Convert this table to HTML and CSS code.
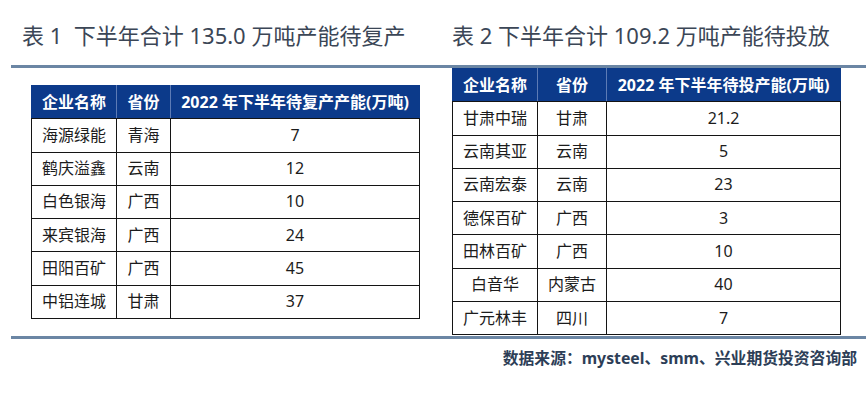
FILE: index.html
```html
<!DOCTYPE html>
<html lang="zh-CN">
<head>
<meta charset="utf-8">
<link rel="stylesheet" href="styles.css">
</head>
<body>
<div class="page">
  <div class="titles">
    <div class="title title-left">表 1&nbsp; 下半年合计 135.0 万吨产能待复产</div>
    <div class="title title-right">表 2 下半年合计 109.2 万吨产能待投放</div>
  </div>
  <div class="rule"></div>
  <div class="tables">
    <div class="col col-left">
      <table class="data t1">
        <colgroup><col class="c1"><col class="c2"><col class="c3"></colgroup>
        <thead>
          <tr><th>企业名称</th><th>省份</th><th>2022 年下半年待复产产能(万吨)</th></tr>
        </thead>
        <tbody>
          <tr><td>海源绿能</td><td>青海</td><td>7</td></tr>
          <tr><td>鹤庆溢鑫</td><td>云南</td><td>12</td></tr>
          <tr><td>白色银海</td><td>广西</td><td>10</td></tr>
          <tr><td>来宾银海</td><td>广西</td><td>24</td></tr>
          <tr><td>田阳百矿</td><td>广西</td><td>45</td></tr>
          <tr><td>中铝连城</td><td>甘肃</td><td>37</td></tr>
        </tbody>
      </table>
    </div>
    <div class="col col-right">
      <table class="data t2">
        <colgroup><col class="c1"><col class="c2"><col class="c3"></colgroup>
        <thead>
          <tr><th>企业名称</th><th>省份</th><th>2022 年下半年待投产能(万吨)</th></tr>
        </thead>
        <tbody>
          <tr><td>甘肃中瑞</td><td>甘肃</td><td>21.2</td></tr>
          <tr><td>云南其亚</td><td>云南</td><td>5</td></tr>
          <tr><td>云南宏泰</td><td>云南</td><td>23</td></tr>
          <tr><td>德保百矿</td><td>广西</td><td>3</td></tr>
          <tr><td>田林百矿</td><td>广西</td><td>10</td></tr>
          <tr><td>白音华</td><td>内蒙古</td><td>40</td></tr>
          <tr><td>广元林丰</td><td>四川</td><td>7</td></tr>
        </tbody>
      </table>
    </div>
  </div>
  <div class="rule rule-bottom"></div>
  <div class="source">数据来源：mysteel、smm、兴业期货投资咨询部</div>
</div>
</body>
</html>
```

FILE: styles.css
```css
html, body {
  margin: 0;
  padding: 0;
  background: #ffffff;
}

.page {
  width: 866px;
  height: 405px;
  font-family: "Noto Sans", "Noto Sans CJK SC", sans-serif;
  color: #1c1c1c;
}

.titles {
  display: grid;
  grid-template-columns: 430px 1fr;
  height: 65px;
  align-items: center;
}

.title {
  font-size: 22px;
  color: #3b4656;
  padding-top: 3px;
  white-space: nowrap;
}

.title-left { padding-left: 22px; }
.title-right { padding-left: 22px; }

.rule {
  margin-left: 11px;
  height: 3px;
  background: #6b86a4;
}

.tables {
  display: grid;
  grid-template-columns: 430px 1fr;
  align-items: start;
}

.col-left { padding: 17px 0 0 31px; }
.col-right { padding: 0 0 0 22px; }

.data {
  border-collapse: collapse;
  table-layout: fixed;
  font-size: 16px;
  line-height: 1.2;
}

.data th,
.data td {
  padding: 0;
  height: 32.3px;
  text-align: center;
  border: 1px solid #141414;
  white-space: nowrap;
}

.data th {
  background: #0c3a8a;
  color: #ffffff;
  font-weight: 700;
  border-top-color: #0c3a8a;
  border-left-color: #5d7bb5;
  border-right-color: #5d7bb5;
}

.data th:first-child { border-left-color: #0c3a8a; }
.data th:last-child { border-right-color: #0c3a8a; }

.t1 { width: 388px; }
.t1 .c1 { width: 85px; }
.t1 .c2 { width: 54px; }
.t1 .c3 { width: 249px; }

.t2 { width: 388px; }
.t2 .c1 { width: 85px; }
.t2 .c2 { width: 69px; }
.t2 .c3 { width: 234px; }

.rule-bottom { margin-top: 1px; }

.source {
  text-align: right;
  padding: 7px 9px 0 0;
  font-size: 15.8px;
  font-weight: 700;
  color: #2d3e57;
  white-space: nowrap;
}
```
